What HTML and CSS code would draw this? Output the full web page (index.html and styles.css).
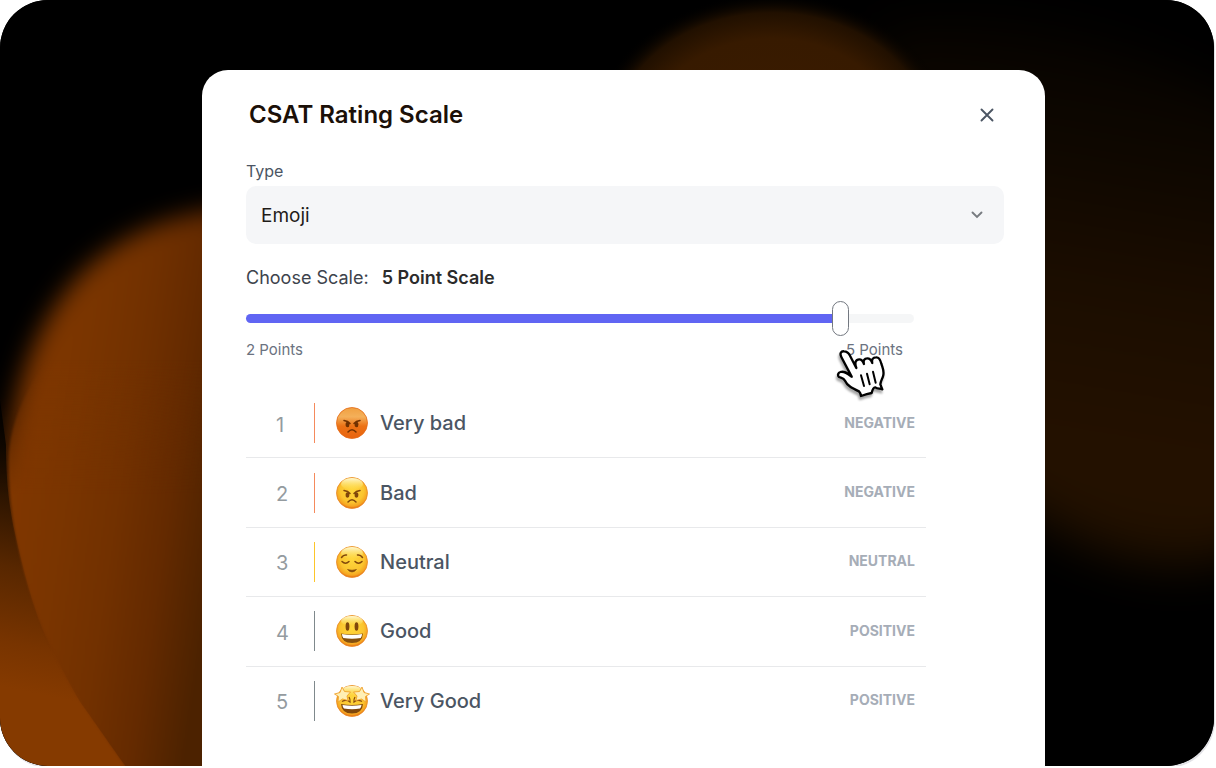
FILE: index.html
```html
<!DOCTYPE html>
<html lang="en">
<head>
<meta charset="utf-8">
<title>CSAT Rating Scale</title>
<link rel="stylesheet" href="styles.css">
</head>
<body>
<main class="stage">
  <svg class="backdrop" viewBox="0 0 1214 766" preserveAspectRatio="none" aria-hidden="true">
    <defs>
      <linearGradient id="leftGlow" gradientUnits="userSpaceOnUse" x1="8" y1="520" x2="215" y2="550">
        <stop offset="0" stop-color="#803700"/><stop offset=".25" stop-color="#7a3500"/><stop offset=".5" stop-color="#723100"/><stop offset=".75" stop-color="#642a00"/><stop offset="1" stop-color="#4c2200"/>
      </linearGradient>
      <linearGradient id="cornerGlow" gradientUnits="userSpaceOnUse" x1="30" y1="390" x2="-30" y2="680">
        <stop offset="0" stop-color="#000"/><stop offset=".35" stop-color="#2a1300"/><stop offset=".6" stop-color="#582700"/><stop offset=".85" stop-color="#783400"/><stop offset="1" stop-color="#853a00"/>
      </linearGradient>
      <radialGradient id="topGlow"><stop offset="0" stop-color="#3c1c00"/><stop offset=".7" stop-color="#371a00"/><stop offset=".87" stop-color="#211000"/><stop offset="1" stop-color="#000" stop-opacity="0"/></radialGradient>
      <linearGradient id="rightGlow" gradientUnits="userSpaceOnUse" x1="1170" y1="20" x2="1080" y2="560"><stop offset="0" stop-color="#040200"/><stop offset=".25" stop-color="#0e0700"/><stop offset=".5" stop-color="#1b0d00"/><stop offset=".8" stop-color="#241100"/><stop offset="1" stop-color="#201000"/></linearGradient>
      <filter id="soft" color-interpolation-filters="sRGB" x="-30%" y="-30%" width="160%" height="160%"><feGaussianBlur stdDeviation="12"/></filter>
      <filter id="edge" color-interpolation-filters="sRGB"><feGaussianBlur stdDeviation="1"/></filter>
      <filter id="haze" color-interpolation-filters="sRGB" x="-30%" y="-30%" width="160%" height="160%"><feGaussianBlur stdDeviation="24"/></filter>
      <linearGradient id="lower" x1="0" y1="0" x2="0" y2="1"><stop offset=".4" stop-color="#000"/><stop offset=".55" stop-color="#fff"/></linearGradient>
      <mask id="lowerMask" maskUnits="userSpaceOnUse" x="0" y="0" width="320" height="900"><rect width="320" height="900" fill="url(#lower)"/></mask>
      <clipPath id="blobSide"><path d="M0 0H320V800H150C110 745 95 722 83 706C75 694 67 678 47 639C37 618 27 587 13 524C8 497 6 475 6 445L0 400Z"/></clipPath>
    </defs>
    <rect width="1214" height="766" fill="#000"/>
    <path d="M880 30C980 10 1130 20 1300 140V500C1260 575 1150 590 1040 520L900 430Z" fill="url(#rightGlow)" filter="url(#haze)"/>
    <ellipse cx="772" cy="145" rx="185" ry="152" fill="url(#topGlow)"/>
    <path d="M0 380H320V800H0Z" fill="url(#cornerGlow)" mask="url(#lowerMask)"/>
    <g clip-path="url(#blobSide)">
      <path d="M290 208C210 201 130 220 75 280C38 323 18 375 12 430C4 500 18 590 45 640L110 790H290Z" fill="url(#leftGlow)" filter="url(#soft)"/>
    </g>
    <path d="M290 245C170 235 110 265 70 325C35 375 12 410 9 455C8 490 13 524 20 555C30 600 47 640 67 678C82 706 105 735 145 795H290Z" fill="url(#leftGlow)" filter="url(#edge)" mask="url(#lowerMask)"/>
  </svg>

  <section class="card" aria-labelledby="title">
    <header class="card-head">
      <h1 id="title">CSAT Rating Scale</h1>
      <button class="close" type="button" aria-label="Close">
        <svg viewBox="0 0 14 14"><path d="M1.5 1.5l11 11M12.5 1.5l-11 11"/></svg>
      </button>
    </header>

    <label class="field-label" for="type">Type</label>
    <div class="select-box">
      <select id="type"><option>Emoji</option></select>
      <svg class="chevron" viewBox="0 0 12 8" aria-hidden="true"><path d="M1.5 1.5L6 6l4.500-4.500"/></svg>
    </div>

    <div class="scale">
      <label class="scale-label" for="scale">Choose Scale: <strong>5 Point Scale</strong></label>
      <input class="slider" id="scale" type="range" min="0" max="100" value="90">
      <div class="ends">
        <span>2 Points</span>
        <span class="end">5 Points
          <svg class="pointer" viewBox="165 203 156 156" aria-hidden="true">
            <path d="M184 230C178 218 184 212 192 213C202 213 206 218 210 226L229 263C223 247 227 237 238 237C246 237 249 243 252 251C249 241 253 234 262 234C270 234 274 240 277 248C274 237 279 231 288 231C298 230 301 238 304 250C309 266 314 274 309 288C306 297 302 302 301 312L307 327C299 324 293 326 286 321C280 320 277 329 275 338C263 340 254 343 243 347C242 341 241 337 237 333C214 322 202 316 195 301C191 292 184 293 177 290C172 285 174 277 181 275C193 271 202 279 215 289Z"/>
            <path class="creases" d="M243 285l9 32M261 280l8 32M279 274l8 33"/>
          </svg>
        </span>
      </div>
    </div>

    <svg class="defs" aria-hidden="true">
      <defs>
        <linearGradient id="red" x1="0" y1="0" x2="0" y2="1"><stop offset="0" stop-color="#f0a040"/><stop offset=".3" stop-color="#f4b05a"/><stop offset=".6" stop-color="#ec7215"/><stop offset="1" stop-color="#e8630f"/></linearGradient>
        <radialGradient id="gold" cx=".5" cy=".42" r=".58"><stop offset="0" stop-color="#ffd73c"/><stop offset=".65" stop-color="#fbc52f"/><stop offset=".88" stop-color="#f5a421"/><stop offset="1" stop-color="#e5650f"/></radialGradient>
        <linearGradient id="shine" x1="0" y1="0" x2="0" y2="1"><stop offset="0" stop-color="#fff8d4"/><stop offset="1" stop-color="#fff176" stop-opacity="0"/></linearGradient>
      </defs>
    </svg>

    <ol class="ratings">
      <li class="row">
        <span class="num">1</span><span class="bar orange"></span>
        <svg class="face" viewBox="0 0 36 36" aria-hidden="true">
          <circle cx="18" cy="18" r="15.500" fill="url(#red)" stroke="#e56a16" stroke-width=".8"/>
          <g fill="none" stroke="#713100" stroke-width="1.500" stroke-linecap="round"><path d="M10 15.500q4 .5 6 3M26 15.500q-4 .5-6 3"/><path d="M14 27q4-4.500 8 0"/></g>
          <ellipse cx="13.500" cy="19.500" rx="1.900" ry="2.800" fill="#713100"/><ellipse cx="22.500" cy="19.500" rx="1.900" ry="2.800" fill="#713100"/>
        </svg>
        <span class="name">Very bad</span><span class="tag">NEGATIVE</span>
      </li>
      <li class="row">
        <span class="num">2</span><span class="bar orange"></span>
        <svg class="face" viewBox="0 0 36 36" aria-hidden="true">
          <circle cx="18" cy="18" r="15.500" fill="url(#gold)" stroke="#e88a24" stroke-width=".8"/><ellipse cx="18" cy="9" rx="11" ry="6" fill="url(#shine)"/>
          <g fill="none" stroke="#80470b" stroke-width="1.500" stroke-linecap="round"><path d="M10 15.500q4 .5 6 3M26 15.500q-4 .5-6 3"/><path d="M14 27q4-4.500 8 0"/></g>
          <ellipse cx="13.500" cy="20" rx="1.900" ry="2.800" fill="#80470b"/><ellipse cx="22.500" cy="20" rx="1.900" ry="2.800" fill="#80470b"/>
        </svg>
        <span class="name">Bad</span><span class="tag">NEGATIVE</span>
      </li>
      <li class="row">
        <span class="num">3</span><span class="bar yellow"></span>
        <svg class="face" viewBox="0 0 36 36" aria-hidden="true">
          <circle cx="18" cy="18" r="15.500" fill="url(#gold)" stroke="#e88a24" stroke-width=".8"/><ellipse cx="18" cy="9" rx="11" ry="6" fill="url(#shine)"/>
          <g fill="none" stroke="#80470b" stroke-width="1.500" stroke-linecap="round"><path d="M7.500 13.500q2-3 5-2.500M28.500 13.500q-2-3-5-2.500"/><path d="M8 17.500q3.500 3.500 7 0M21 17.500q3.500 3.500 7 0"/></g><path d="M13.500 25.500q4.500 1.500 9 0q-4.500 5-9 0" fill="#80470b" stroke="#80470b" stroke-width=".6"/>
        </svg>
        <span class="name">Neutral</span><span class="tag">NEUTRAL</span>
      </li>
      <li class="row">
        <span class="num">4</span><span class="bar gray"></span>
        <svg class="face" viewBox="0 0 36 36" aria-hidden="true">
          <circle cx="18" cy="18" r="15.500" fill="url(#gold)" stroke="#e88a24" stroke-width=".8"/><ellipse cx="18" cy="8" rx="11" ry="5" fill="url(#shine)"/>
          <ellipse cx="13.500" cy="13.500" rx="1.900" ry="4.200" fill="#80470b"/><ellipse cx="22.500" cy="13.500" rx="1.900" ry="4.200" fill="#80470b"/>
          <path d="M7 20.500q11 2 22 0q-.5 9.500-11 9.500T7 20.500z" fill="#85500f"/><path d="M8 21q10 1.800 20 0q0 2.500-1.300 4q-8.700 1.500-17.400 0Q8 23.500 8 21z" fill="#fff"/>
        </svg>
        <span class="name">Good</span><span class="tag">POSITIVE</span>
      </li>
      <li class="row">
        <span class="num">5</span><span class="bar gray"></span>
        <svg class="face" viewBox="0 0 36 36" aria-hidden="true">
          <circle cx="18" cy="18" r="15.500" fill="url(#gold)" stroke="#e88a24" stroke-width=".8"/><ellipse cx="18" cy="8" rx="11" ry="5" fill="url(#shine)"/>
          <path d="M7 21q11 2 22 0q-.5 9.500-11 9.500T7 21z" fill="#80470b"/><path d="M8.500 22q9.500 1.500 19 0q-.2 2-1.500 3.500q-8 1.300-16 0q-1.300-1.500-1.500-3.500z" fill="#fff"/>
          <path d="M8 18.500q4.500-2.500 8 .5q.5-2.500-1-5M28 18.500q-4.500-2.500-8 .5q-.5-2.500 1-5" fill="none" stroke="#8a4a0c" stroke-width="1.300"/>
          <g fill="#ffefb4" stroke="#efa22c" stroke-width=".9" stroke-linejoin="round"><path d="M8 4l2.500 4.500 6 .5-3.500 4 1 4.500-5.500-1.500-4.500 3 .5-5.500L.5 11l5.500-1.500z"/><path d="M28 4l-2.500 4.500-6 .5 3.500 4-1 4.500 5.500-1.500 4.500 3-.5-5.500 4-2.500-5.500-1.500z"/></g>
        </svg>
        <span class="name">Very Good</span><span class="tag">POSITIVE</span>
      </li>
    </ol>
  </section>
</main>
</body>
</html>
```
FILE: styles.css
```css
* { box-sizing: border-box; }

body {
  margin: 0;
  background: #fff;
  font-family: Inter, "Liberation Sans", sans-serif;
  color: #4b5563;
}

.stage {
  position: relative;
  display: flex;
  min-height: calc(100vh - 2px);
  margin-right: 2px;
  padding: 70px 169px 0 202px;
  border-radius: 48px;
  overflow: hidden;
  background: #000;
  box-shadow: 1px 2px 0 #e2e2e6;
}

.backdrop {
  position: absolute;
  inset: 0;
  width: 100%;
  height: 100%;
}

.card {
  position: relative;
  flex: 1;
  min-width: 0;
  padding: 28px 41px 30px 44px;
  background: #fff;
  border-radius: 26px 26px 0 0;
}

.card-head {
  display: flex;
  align-items: center;
  justify-content: space-between;
  padding: 0 7px 0 3px;
}

h1 {
  margin: 0;
  font-size: 24px;
  line-height: 34px;
  font-weight: 600;
  color: #1b1008;
}

.close {
  display: grid;
  place-items: center;
  width: 20px;
  height: 20px;
  padding: 0;
  border: 0;
  background: none;
}

.close svg { width: 14px; height: 14px; }

.close path, .chevron path {
  fill: none;
  stroke: #4b5563;
  stroke-width: 1.9;
  stroke-linecap: round;
}

.field-label {
  display: block;
  margin-top: 28px;
  font-size: 16px;
  line-height: 22px;
}

.select-box {
  position: relative;
  margin-top: 4px;
}

select {
  display: block;
  appearance: none;
  width: 100%;
  height: 58px;
  padding: 0 15px;
  border: 0;
  border-radius: 10px;
  background: #f5f6f8;
  font: 400 19px Inter, "Liberation Sans", sans-serif;
  color: #1f1b18;
}

.chevron {
  position: absolute;
  right: 21px;
  top: 25px;
  width: 12px;
  height: 8px;
  pointer-events: none;
}

.chevron path { stroke: #777b80; }

.scale {
  max-width: 668px;
  margin-top: 20px;
}

.scale-label {
  display: block;
  font-size: 18px;
  line-height: 28px;
  color: #3d434c;
}

.scale-label strong {
  margin-left: 8px;
  font-weight: 600;
  color: #2b2b2b;
}

.slider {
  display: block;
  appearance: none;
  width: 100%;
  height: 35px;
  margin: 9px 0 0;
  background: none;
}

.slider::-webkit-slider-runnable-track {
  height: 9px;
  border-radius: 5px;
  background: linear-gradient(to right, #6065f3 89%, #f5f6f7 89%);
}

.slider::-webkit-slider-thumb {
  appearance: none;
  width: 17px;
  height: 35px;
  margin-top: -13px;
  border: 1px solid #737880;
  border-radius: 9px;
  background: #fff;
}

.ends {
  display: flex;
  justify-content: space-between;
  margin-top: 3px;
  padding-right: 11px;
  font-size: 15px;
  line-height: 22px;
  color: #6b7280;
}

.end { position: relative; }

.pointer {
  position: absolute;
  left: -11px;
  top: 9px;
  width: 52px;
  height: 52px;
  overflow: visible;
  filter: drop-shadow(-1px 3px 1px rgba(0, 0, 0, .35));
}

.pointer path {
  fill: #fff;
  stroke: #000;
  stroke-width: 7;
  stroke-linejoin: round;
  stroke-linecap: round;
}

.pointer .creases { stroke-width: 6; }

.defs { position: absolute; width: 0; height: 0; }

.ratings {
  display: grid;
  grid-auto-rows: 1fr;
  max-width: 680px;
  min-height: 347px;
  margin: 28px 0 0;
  padding: 0;
  list-style: none;
}

.row {
  display: flex;
  align-items: center;
  padding-right: 11px;
  border-bottom: 1px solid #e8e9eb;
}

.row:last-child { border-bottom-color: transparent; }

.num {
  width: 68px;
  padding: 3px 0 0 30px;
  font-size: 20px;
  line-height: 24px;
  color: #949b9f;
}

.bar { width: 1px; height: 40px; }
.orange { background: #f58a5c; }
.yellow { background: #fcc52a; }
.gray { background: #7f898c; }

.face {
  width: 36px;
  height: 36px;
  margin-left: 19px;
}

.name {
  flex: 1;
  margin-left: 10px;
  font-size: 20px;
  font-weight: 500;
}

.tag {
  padding-bottom: 2px;
  font-size: 14px;
  font-weight: 700;
  color: #a6adb7;
}
```
